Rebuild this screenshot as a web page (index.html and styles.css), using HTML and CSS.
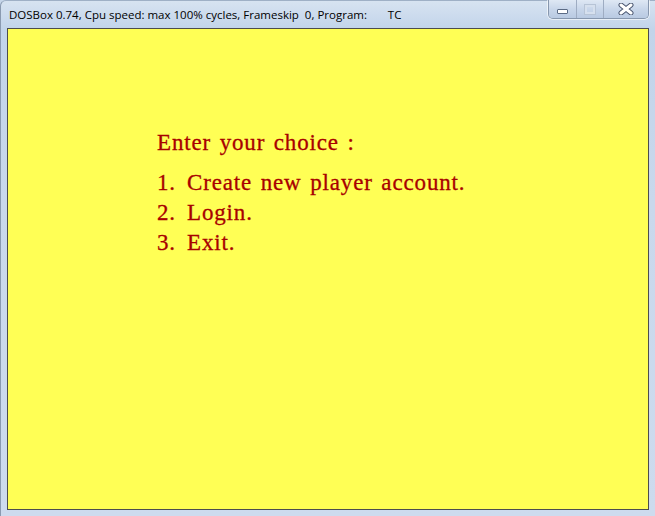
FILE: index.html
```html
<!DOCTYPE html>
<html>
<head>
<meta charset="utf-8">
<link rel="stylesheet" href="styles.css">
</head>
<body>
<div class="window">
  <div class="titlebar">
    <div class="title">DOSBox 0.74, Cpu speed: max 100% cycles, Frameskip&nbsp; 0, Program:&nbsp;&nbsp;&nbsp;&nbsp;&nbsp;&nbsp; TC</div>
    <div class="controls">
      <div class="btn min"><span class="min-bar"></span></div>
      <div class="btn max"><span class="max-box"></span></div>
      <div class="btn close">
        <svg width="16" height="12" viewBox="0 0 16 12"><path d="M3 2 L13 10 M13 2 L3 10" stroke="#4a5670" stroke-width="5" stroke-linecap="round"/><path d="M3 2 L13 10 M13 2 L3 10" stroke="#ffffff" stroke-width="3" stroke-linecap="round"/></svg>
      </div>
    </div>
  </div>
  <div class="client">
    <div class="menu">
      <p class="heading">Enter your choice :</p>
      <p class="item"><span class="num">1.</span>Create new player account.</p>
      <p class="item"><span class="num">2.</span>Login.</p>
      <p class="item"><span class="num">3.</span>Exit.</p>
    </div>
  </div>
</div>
</body>
</html>
```
FILE: styles.css
```css
* { box-sizing: border-box; }
html, body { margin: 0; padding: 0; }
body { width: 655px; height: 516px; overflow: hidden; background: #c6d6ea; }
.window {
  width: 655px; height: 516px;
  background: linear-gradient(180deg, #d7e3f1 0px, #c2d4ea 28px, #c9d8ec 200px, #cddbee 516px);
  display: flex; flex-direction: column;
  border-left: 1px solid #8a9ab0;
  border-top: 1px solid #9fb0c6;
  border-top-left-radius: 6px;
}
.titlebar {
  height: 27px; display: flex; justify-content: space-between; align-items: flex-start;
}
.title {
  font-family: "Open Sans", sans-serif; font-size: 11.5px; color: #000;
  padding: 6px 0 0 8px; white-space: pre;
}
.controls {
  display: flex; margin-right: 6px; margin-top: -1px;
  border: 1px solid #8797ae; border-top: none;
  border-radius: 0 0 5px 5px; overflow: hidden;
  height: 19px;
  box-shadow: 0 0 0 1px rgba(255,255,255,0.6);
}
.btn {
  height: 18px; display: flex; align-items: center; justify-content: center;
  background: linear-gradient(180deg, #dfe8f4 0%, #c8d6ea 50%, #b9cae2 100%);
}
.min { width: 28px; border-right: 1px solid #9eacc2; }
.max { width: 27px; border-right: 1px solid #9eacc2; }
.close { width: 44px; }
.min-bar {
  width: 11px; height: 5px; background: #fff; border: 1px solid #5b6b85; margin-top: 5px; border-radius: 1px;
}
.max-box {
  width: 10px; height: 9px; border: 2px solid #d6e0ee; outline: 1px solid #b7c4d6;
}
.client {
  margin: 0 6px 0 6px;
  width: 642px; height: 482px;
  border: 1px solid #4d4d4d;
  background: #ffff55;
}
.menu {
  padding: 99px 0 0 149px;
  font-family: "Liberation Serif", serif; color: #a80000;
  font-size: 23px;
  -webkit-text-stroke: 0.3px #a80000;
}
.menu p { margin: 0; white-space: pre; letter-spacing: 0.85px; word-spacing: 2px; }
.num { display: inline-block; width: 30px; }
.heading { line-height: 30px; margin-bottom: 10px !important; }
.item { line-height: 30px; }
```
